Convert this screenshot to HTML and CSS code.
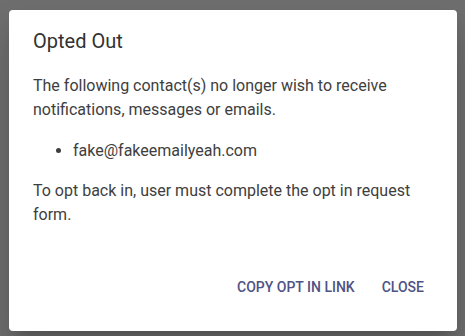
FILE: index.html
```html
<!DOCTYPE html>
<html lang="en">
<head>
<meta charset="utf-8">
<title>Opted Out</title>
<link rel="stylesheet" href="styles.css">
</head>
<body>
<div class="dialog">
  <h2 class="title">Opted Out</h2>
  <div class="content">
    <p class="intro">The following contact(s) no longer wish to receive notifications, messages or emails.</p>
    <ul class="list">
      <li>fake@fakeemailyeah.com</li>
    </ul>
    <p class="note">To opt back in, user must complete the opt in request form.</p>
  </div>
  <div class="actions">
    <button class="btn">Copy opt in link</button>
    <button class="btn">Close</button>
  </div>
</div>
</body>
</html>
```

FILE: styles.css
```css
html, body {
  margin: 0;
  padding: 0;
}
body {
  width: 465px;
  height: 336px;
  background: #6e6e6e;
  font-family: Roboto, "Liberation Sans", sans-serif;
  overflow: hidden;
}
.dialog {
  box-sizing: border-box;
  margin: 10px 0 0 9px;
  width: 448px;
  height: 321px;
  background: #fff;
  border-radius: 4px;
  padding: 19px 24px 26px 24px;
  display: flex;
  flex-direction: column;
  box-shadow: 0 11px 15px -7px rgba(0,0,0,.2), 0 24px 38px 3px rgba(0,0,0,.14);
}
.title {
  margin: 0;
  font-size: 20px;
  font-weight: 400;
  line-height: 24px;
  color: #323232;
}
.content {
  margin-top: 21px;
  font-size: 16px;
  line-height: 24px;
  color: #3e3e3e;
}
.content p {
  margin: 0;
}
.intro {
  margin-bottom: 17px !important;
}
.list {
  margin: 0 0 16px 0;
  padding-left: 40px;
}
.actions {
  margin-top: auto;
  display: flex;
  justify-content: flex-end;
  gap: 11px;
  padding-right: 1px;
}
.btn {
  font-family: Roboto, "Liberation Sans", sans-serif;
  font-size: 14px;
  font-weight: 500;
  text-transform: uppercase;
  color: #4f5284;
  background: transparent;
  border: none;
  padding: 0 8px;
  height: 36px;
  line-height: 36px;
  border-radius: 4px;
  cursor: pointer;
}
```
